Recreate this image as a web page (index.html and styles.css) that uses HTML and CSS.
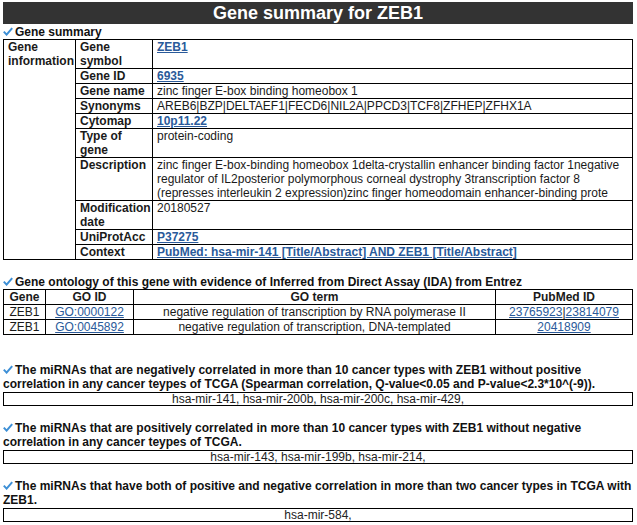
FILE: index.html
```html
<!DOCTYPE html>
<html>
<head>
<meta charset="utf-8">
<link rel="stylesheet" href="styles.css">
</head>
<body>
<div class="page">
  <div class="title-bar">Gene summary for ZEB1</div>

  <div class="heading first"><svg class="check" viewBox="0 0 10 9" width="10" height="9"><path d="M0.8 4.6 L3.6 7.6 L9.2 1.2" fill="none" stroke="#3d8fd6" stroke-width="2"/></svg>Gene summary</div>
  <table class="info">
    <colgroup><col class="c1"><col class="c2"><col></colgroup>
    <tr><th rowspan="10" class="grp">Gene information</th><th>Gene symbol</th><td><a class="b" href="#">ZEB1</a></td></tr>
    <tr><th>Gene ID</th><td><a class="b" href="#">6935</a></td></tr>
    <tr><th>Gene name</th><td>zinc finger E-box binding homeobox 1</td></tr>
    <tr><th>Synonyms</th><td>AREB6|BZP|DELTAEF1|FECD6|NIL2A|PPCD3|TCF8|ZFHEP|ZFHX1A</td></tr>
    <tr><th>Cytomap</th><td><a class="b" href="#">10p11.22</a></td></tr>
    <tr><th>Type of gene</th><td>protein-coding</td></tr>
    <tr><th>Description</th><td>zinc finger E-box-binding homeobox 1delta-crystallin enhancer binding factor 1negative regulator of IL2posterior polymorphous corneal dystrophy 3transcription factor 8 (represses interleukin 2 expression)zinc finger homeodomain enhancer-binding prote</td></tr>
    <tr><th>Modification date</th><td>20180527</td></tr>
    <tr><th>UniProtAcc</th><td><a class="b" href="#">P37275</a></td></tr>
    <tr><th>Context</th><td><a class="b" href="#">PubMed: hsa-mir-141 [Title/Abstract] AND ZEB1 [Title/Abstract]</a></td></tr>
  </table>

  <div class="heading go-head"><svg class="check" viewBox="0 0 10 9" width="10" height="9"><path d="M0.8 4.6 L3.6 7.6 L9.2 1.2" fill="none" stroke="#3d8fd6" stroke-width="2"/></svg>Gene ontology of this gene with evidence of Inferred from Direct Assay (IDA) from Entrez</div>
  <table class="go">
    <colgroup><col class="g1"><col class="g2"><col class="g3"><col></colgroup>
    <tr><th>Gene</th><th>GO ID</th><th>GO term</th><th>PubMed ID</th></tr>
    <tr><td>ZEB1</td><td><a href="#">GO:0000122</a></td><td>negative regulation of transcription by RNA polymerase II</td><td><a href="#">23765923</a>|<a href="#">23814079</a></td></tr>
    <tr><td>ZEB1</td><td><a href="#">GO:0045892</a></td><td>negative regulation of transcription, DNA-templated</td><td><a href="#">20418909</a></td></tr>
  </table>

  <div class="heading mir first-mir"><svg class="check" viewBox="0 0 10 9" width="10" height="9"><path d="M0.8 4.6 L3.6 7.6 L9.2 1.2" fill="none" stroke="#3d8fd6" stroke-width="2"/></svg>The miRNAs that are negatively correlated in more than 10 cancer types with ZEB1 without positive correlation in any cancer teypes of TCGA (Spearman correlation, Q-value&lt;0.05 and P-value&lt;2.3*10^(-9)).</div>
  <div class="box">hsa-mir-141, hsa-mir-200b, hsa-mir-200c, hsa-mir-429,</div>

  <div class="heading mir"><svg class="check" viewBox="0 0 10 9" width="10" height="9"><path d="M0.8 4.6 L3.6 7.6 L9.2 1.2" fill="none" stroke="#3d8fd6" stroke-width="2"/></svg>The miRNAs that are positively correlated in more than 10 cancer types with ZEB1 without negative correlation in any cancer teypes of TCGA.</div>
  <div class="box">hsa-mir-143, hsa-mir-199b, hsa-mir-214,</div>

  <div class="heading mir"><svg class="check" viewBox="0 0 10 9" width="10" height="9"><path d="M0.8 4.6 L3.6 7.6 L9.2 1.2" fill="none" stroke="#3d8fd6" stroke-width="2"/></svg>The miRNAs that have both of positive and negative correlation in more than two cancer types in TCGA with ZEB1.</div>
  <div class="box">hsa-mir-584,</div>
</div>
</body>
</html>
```

FILE: styles.css
```css
html, body {
  margin: 0;
  padding: 0;
  background: #ffffff;
}
body {
  font-family: "Liberation Sans", Arial, sans-serif;
  font-size: 12px;
  line-height: 14px;
  color: #1a1a1a;
}
.page {
  width: 630px;
  padding: 2px 0 0 3px;
}
.title-bar {
  background: #333333;
  color: #ffffff;
  font-weight: bold;
  font-size: 18px;
  line-height: 22px;
  height: 22px;
  text-align: center;
}
.heading {
  font-weight: bold;
  color: #111;
}
.check {
  display: inline-block;
  margin: 0 2px 0 0;
  vertical-align: 0;
}
.heading.first {
  margin-top: 1px;
}
table {
  border-collapse: collapse;
  width: 630px;
}
th, td {
  border: 1px solid #000;
  padding: 0 4px;
  vertical-align: top;
  text-align: left;
}
th {
  font-weight: bold;
}
.info {
  table-layout: fixed;
}
.info .c1 { width: 72px; }
.info .c2 { width: 77px; }
.info th, .info td { padding-left: 4px; padding-right: 3px; }
a {
  color: #2a5a9a;
  text-decoration: underline;
}
a.b { font-weight: bold; }

.go-head {
  margin-top: 15px;
}
.go th, .go td {
  text-align: center;
  padding: 0 2px;
}
.go .g1 { width: 42px; }
.go .g2 { width: 88px; }
.go .g3 { width: 362px; }

.mir {
  margin-top: 15px;
}
.mir.first-mir {
  margin-top: 28px;
}
.box {
  border: 1px solid #000;
  text-align: center;
  line-height: 12px;
  height: 12px;
  margin-top: 1px;
  color: #222;
  width: 628px;
}
```
